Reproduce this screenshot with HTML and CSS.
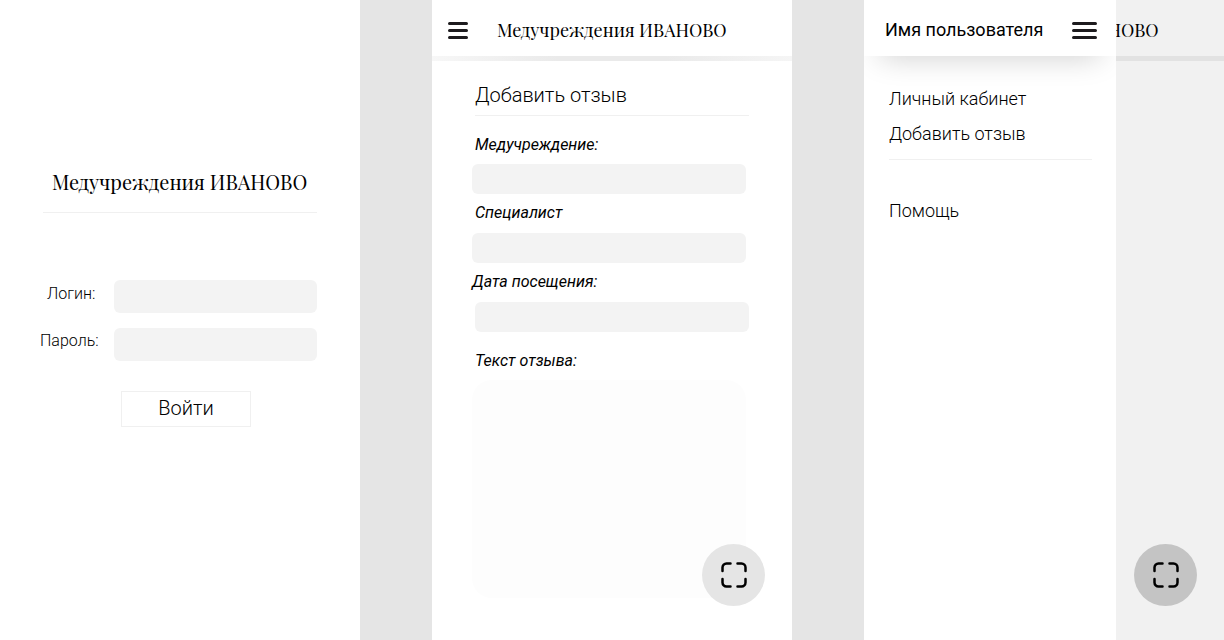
FILE: index.html
```html
<!DOCTYPE html>
<html lang="ru">
<head>
<meta charset="utf-8">
<title>Медучреждения ИВАНОВО</title>
<link rel="stylesheet" href="styles.css">
</head>
<body>
<main class="board">
  <section class="screen login">
    <h1 class="brand brand-large"><span>Медучреждения ИВАНОВО</span></h1>
    <form class="login-form">
      <label class="login-row"><span class="login-label login-name">Логин:</span><input class="field" type="text"></label>
      <label class="login-row"><span class="login-label">Пароль:</span><input class="field" type="password"></label>
      <button class="enter" type="button">Войти</button>
    </form>
  </section>

  <section class="screen review">
    <header class="topbar">
      <svg class="burger" width="20" height="17" viewBox="0 0 20 17"><path d="M1.5 1.5h17M1.5 8.5h17M1.5 15.5h17"/></svg>
      <span class="brand">Медучреждения ИВАНОВО</span>
    </header>
    <div class="divider"></div>
    <form class="review-form">
      <h2 class="heading">Добавить отзыв</h2>
      <label class="group"><span class="caption">Медучреждение:</span><input class="field" type="text"></label>
      <label class="group raised"><span class="caption">Специалист</span><input class="field" type="text"></label>
      <label class="group raised visit"><span class="caption">Дата посещения:</span><input class="field" type="text"></label>
      <label class="group message"><span class="caption">Текст отзыва:</span><textarea class="textarea"></textarea></label>
    </form>
    <button class="fab" type="button"><svg width="26" height="26" viewBox="0 0 26 26"><path d="M1.5 9V5.5a4 4 0 0 1 4-4H9.500M16.500 1.500H20.500a4 4 0 0 1 4 4V9M24.500 17V20.500a4 4 0 0 1-4 4H16.500M9.500 24.500H5.500a4 4 0 0 1-4-4V17"/></svg></button>
  </section>

  <section class="screen dimmed">
    <header class="topbar">
      <span class="brand">Медучреждения ИВАНОВО</span>
    </header>
    <div class="divider"></div>
    <button class="fab" type="button"><svg width="26" height="26" viewBox="0 0 26 26"><path d="M1.5 9V5.5a4 4 0 0 1 4-4H9.500M16.500 1.500H20.500a4 4 0 0 1 4 4V9M24.500 17V20.500a4 4 0 0 1-4 4H16.500M9.500 24.500H5.500a4 4 0 0 1-4-4V17"/></svg></button>
    <aside class="drawer">
      <header class="userbar">
        <span class="user">Имя пользователя</span>
        <svg class="burger" width="25" height="17" viewBox="0 0 25 17"><path d="M1.5 1.5h22M1.5 8.5h22M1.5 15.5h22"/></svg>
      </header>
      <nav class="menu">
        <a class="item">Личный кабинет</a>
        <a class="item">Добавить отзыв</a>
        <hr class="rule">
        <a class="item">Помощь</a>
      </nav>
    </aside>
  </section>
</main>
</body>
</html>
```
FILE: styles.css
```css
* { box-sizing: border-box; }
body {
  margin: 0;
  background: #e5e5e5;
  color: #000;
  font-family: Roboto, "Liberation Sans", sans-serif;
}
.board { display: flex; gap: 72px; width: 1224px; height: 640px; overflow: hidden; }
.screen { position: relative; flex: 0 0 360px; height: 640px; background: #fff; overflow: hidden; }
.brand {
  font-family: "Playfair Display", "Liberation Serif", serif;
  font-weight: 400;
  font-size: 18px;
  line-height: 24px;
  white-space: nowrap;
}
.field {
  display: block;
  width: 274px;
  height: 30px;
  border: 0;
  border-radius: 6px;
  background: #f3f3f3;
}
.burger { fill: none; stroke: #1d1b1e; stroke-width: 3; stroke-linecap: round; }

.login { padding: 170px 43px 0; }
.brand-large {
  width: 274px;
  height: 43px;
  margin: 0;
  padding-left: 9px;
  border-bottom: 1px solid #f0f0f0;
  font-size: 20px;
  line-height: 24px;
}
.login-form { display: flex; flex-direction: column; gap: 15px; padding-top: 67px; }
.login-row { display: flex; justify-content: space-between; margin-left: -3px; }
.login-row .field { width: 203px; height: 33px; }
.login-label { padding-top: 3px; font-size: 16px; font-weight: 300; line-height: 20px; }
.login-name { padding: 4px 0 0 7px; }
.enter {
  width: 130px;
  height: 36px;
  margin: 15px 0 0 78px;
  padding: 0 0 2px;
  border: 1px solid #f0f0f0;
  background: #fff;
  color: #000;
  font: 300 20px/32px Roboto, sans-serif;
}

.topbar { display: flex; height: 56px; padding: 18px 0 0 16px; }
.topbar .burger { margin: 4px 29px 0 0; }
.divider { height: 5px; background: linear-gradient(90deg, #f7f7f7, #eaeaea 35%, #eaeaea 65%, #f5f5f5); }
.review-form { width: 277px; margin-left: 40px; }
.heading {
  height: 55px;
  margin: 0 0 19px 3px;
  padding-top: 22px;
  border-bottom: 1px solid #f0f0f0;
  font-size: 20px;
  font-weight: 300;
  line-height: 24px;
}
.group { display: block; height: 69px; }
.caption {
  display: block;
  height: 29px;
  padding-left: 3px;
  font-size: 16px;
  font-style: italic;
  line-height: 20px;
}
.raised .caption { line-height: 18px; }
.visit { height: 78px; }
.visit .caption { padding-left: 0; }
.visit .field { margin-left: 3px; }
.textarea {
  display: block;
  width: 274px;
  height: 218px;
  border: 0;
  border-radius: 20px;
  background: #fdfdfd;
  resize: none;
}
.fab {
  position: absolute;
  right: 27px;
  bottom: 34px;
  display: grid;
  place-items: center;
  width: 63px;
  height: 62px;
  padding: 0;
  border: 0;
  border-radius: 50%;
  background: #e5e5e5;
}
.fab svg { fill: none; stroke: #000; stroke-width: 2.5; stroke-linecap: round; }

.dimmed { background: #f1f1f1; }
.dimmed .topbar { padding-left: 65px; }
.dimmed .divider { background: #e2e2e2; }
.dimmed .fab { background: #c4c4c4; }
.drawer { position: absolute; inset: 0 auto 0 0; width: 252px; background: #fff; overflow: hidden; }
.userbar {
  display: flex;
  justify-content: space-between;
  height: 56px;
  padding: 19px 19px 0 21px;
  background: #fff;
  box-shadow: 0 16px 30px -16px rgba(0, 0, 0, .22);
}
.userbar .burger { margin-top: 3px; }
.user { font-size: 18px; line-height: 22px; }
.menu { display: flex; flex-direction: column; padding: 32px 23px 0 25px; }
.item { height: 35px; font-size: 18px; font-weight: 300; line-height: 22px; }
.rule { width: 203px; height: 1px; margin: 1px 0 40px; border: 0; background: #f0f0f0; }
```
